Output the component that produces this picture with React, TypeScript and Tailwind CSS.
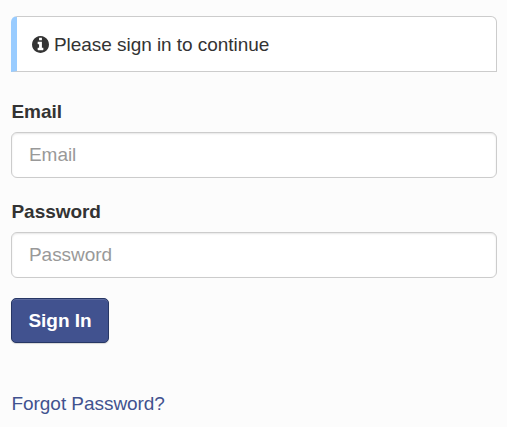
import { useState } from 'react'

type FieldProps = {
  id: string
  label: string
  type: string
  value: string
  onChange: (value: string) => void
}

function InfoIcon() {
  return (
    <svg
      viewBox="128 128 1536 1536"
      fill="currentColor"
      className="w-[17px] h-[17px] mr-[5px]"
      aria-hidden="true"
    >
      <path d="M1152 1376v-160q0-14-9-23t-23-9h-96v-512q0-14-9-23t-23-9h-320q-14 0-23 9t-9 23v160q0 14 9 23t23 9h96v320h-96q-14 0-23 9t-9 23v160q0 14 9 23t23 9h448q14 0 23-9t9-23zM1024 480v-160q0-14-9-23t-23-9h-192q-14 0-23 9t-9 23v160q0 14 9 23t23 9h192q14 0 23-9t9-23zM1664 896q0 209-103 385.5t-279.5 279.5-385.5 103-385.5-103-279.5-279.5-103-385.5 103-385.5 279.5-279.5 385.5-103 385.5 103 279.5 279.5 103 385.5z" />
    </svg>
  )
}

function Field({ id, label, type, value, onChange }: FieldProps) {
  return (
    <div className="mb-5">
      <label htmlFor={id} className="block h-[27px] mb-[7px] pl-[0.5px] font-bold">
        {label}
      </label>
      <input
        id={id}
        type={type}
        placeholder={label}
        value={value}
        onChange={(e) => onChange(e.target.value)}
        className="block w-full h-[46px] px-[17px] rounded-md border border-[#ccc] bg-white shadow-[inset_0_1px_2px_rgba(0,0,0,0.1)] outline-none placeholder:text-[#999]"
      />
    </div>
  )
}

export default function App() {
  const [email, setEmail] = useState('')
  const [password, setPassword] = useState('')

  return (
    <div className="min-h-screen bg-[#fcfcfc] pt-4 pl-[11px] pr-2.5 font-['Liberation_Sans',Arial,sans-serif] text-[19px] leading-[27px] tracking-[-0.05px] text-[#333]">
      {/* Notice */}
      <div className="flex items-center h-14 mb-[26px] pl-[15px] rounded-t-md border border-l-6 border-[#ccc] border-l-[#99ccff] bg-white">
        <InfoIcon />
        <span>Please sign in to continue</span>
      </div>

      <form onSubmit={(e) => e.preventDefault()}>
        <Field id="email" label="Email" type="email" value={email} onChange={setEmail} />
        <Field
          id="password"
          label="Password"
          type="password"
          value={password}
          onChange={setPassword}
        />
        <button
          type="submit"
          className="block w-[98px] h-[45px] rounded-[5px] border border-[#273765] bg-[#41528f] font-bold text-white shadow-[inset_0_1px_0_rgba(255,255,255,0.15),0_1px_1px_rgba(0,0,0,0.15)]"
        >
          Sign In
        </button>
      </form>

      <a href="#" className="inline-block mt-[47px] pl-[0.5px] text-[#41528f]">
        Forgot Password?
      </a>
    </div>
  )
}
